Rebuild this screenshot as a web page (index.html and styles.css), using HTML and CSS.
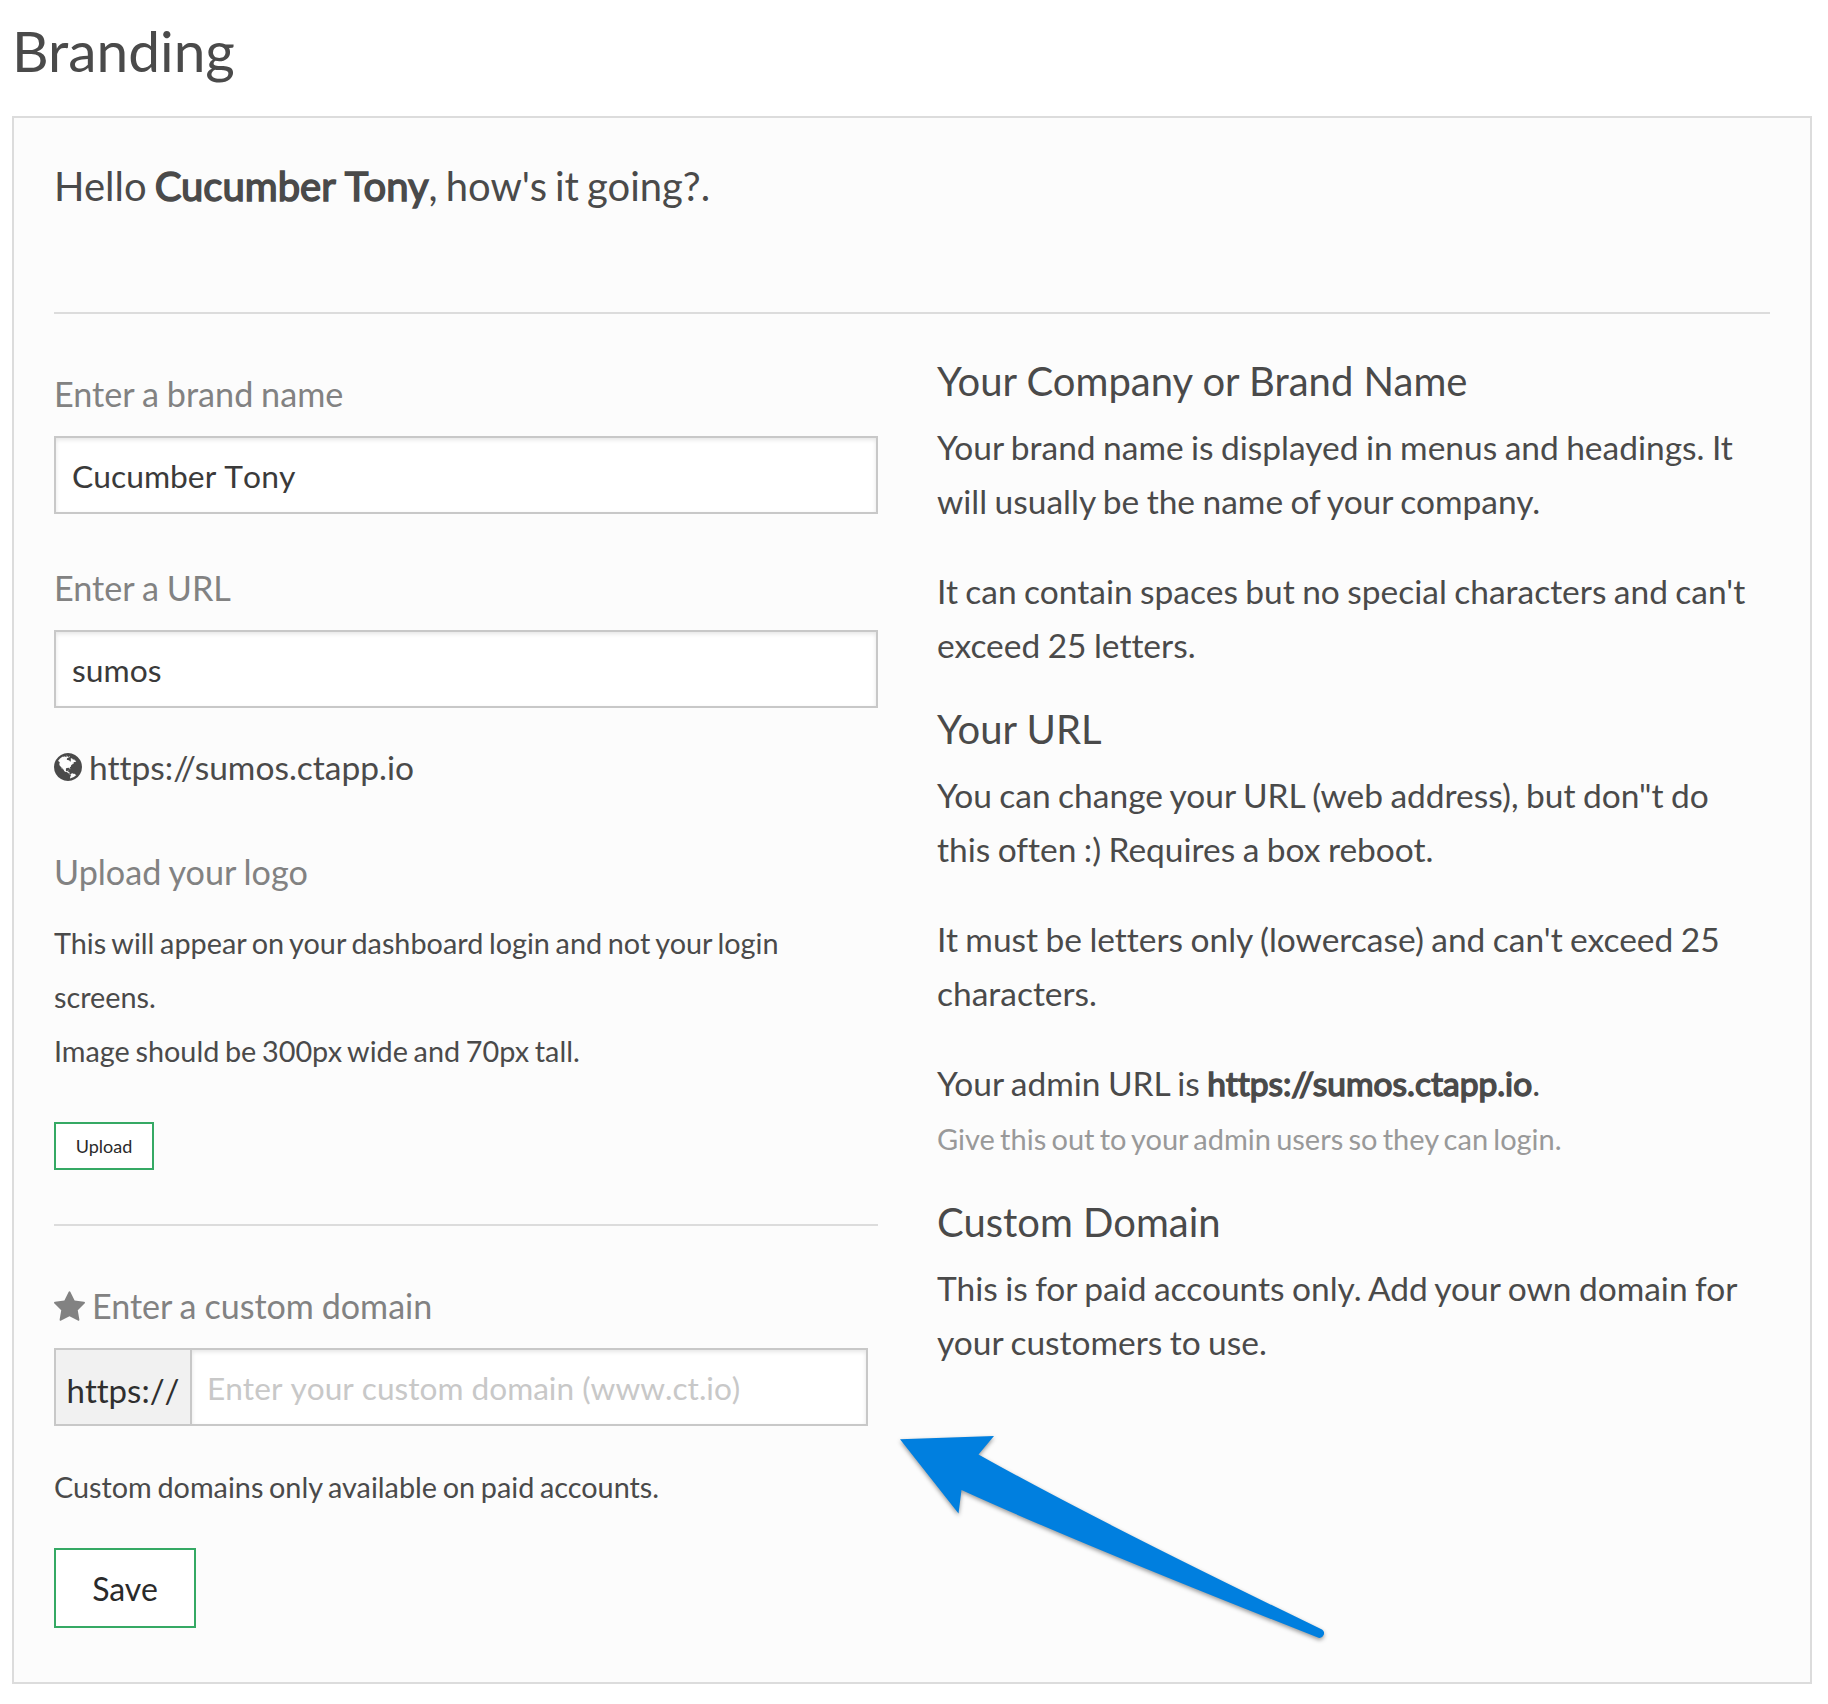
FILE: index.html
```html
<!DOCTYPE html>
<html lang="en">
<head>
<meta charset="utf-8">
<title>Branding</title>
<link rel="stylesheet" href="styles.css">
</head>
<body>
<h1 class="page-title">Branding</h1>
<main class="panel">
  <p class="greeting">Hello <b class="strong">Cucumber Tony</b>, how's it going?.</p>
  <div class="columns">
    <form class="form">
      <label class="label" for="brand">Enter a brand name</label>
      <input class="input" id="brand" type="text" value="Cucumber Tony">
      <label class="label label-next" for="url">Enter a URL</label>
      <input class="input" id="url" type="text" value="sumos">
      <p class="site-url"><svg class="globe" viewBox="128 128 1536 1536"><path d="M896 128q209 0 385.500 103t279.500 279.500 103 385.500-103 385.500-279.500 279.500-385.500 103-385.500-103-279.500-279.500-103-385.500 103-385.500 279.500-279.500 385.500-103zm274 521q-2 1-9.500 9.500t-13.500 9.500q2 0 4.500-5t5-11 3.500-7q6-7 22-15 14-6 52-12 34-8 51 11-2-2 9.500-13t14.500-12q3-2 15-4.500t15-7.500l2-22q-12 1-17.500-7t-6.500-21q0 2-6 8 0-7-4.500-8t-11.500 1-9 1q-10-3-15-7.500t-8-16.500-4-15q-2-5-9.500-11t-9.500-10q-1-2-2.500-5.500t-3-6.500-4-5.500-5.500-2.500-7 5-7.500 10-4.500 5q-3-2-6-1.500t-4.500 1-4.500 3-5 3.500q-3 2-8.500 3t-8.500 2q15-5-1-11-10-4-16-3 9-4 7.500-12t-8.500-14h5q-1-4-8.500-8.500t-17.500-8.500-13-6q-8-5-34-9.500t-33-.5q-5 6-4.500 10.500t4 14 3.500 12.500q1 6-5.500 13t-6.500 12q0 7 14 15.500t10 21.500q-3 8-16 16t-16 12q-5 8-1.500 18.500t10.500 16.500q2 2 1.500 4t-3.500 4.500-5.500 4-6.500 3.500l-3 2q-11 5-20.500-6t-13.500-26q-7-25-16-30-23-8-29 1-5-13-41-26-25-9-58-4 6-1 0-15-7-15-19-12 3-6 4-17.500t1-13.500q3-13 12-23 1-1 7-8.500t9.500-13.500.5-6q35 4 50-11 5-5 11.500-17t10.500-17q9-6 14-5.500t14.500 5.500 14.500 5q14 1 15.500-11t-7.500-20q12 1 3-17-4-7-8-9-12-4-27 5-8 4 2 8-1-1-9.500 10.500t-16.500 17.500-16-5q-1-1-5.500-13.500t-9.500-13.500q-8 0-16 15 3-8-11-15t-24-8q19-12-8-27-7-4-20.500-5t-19.500 4q-5 7-5.500 11.500t5 8 10.500 5.500 11.500 4 8.500 3q14 10 8 14-2 1-8.500 3.500t-11.500 4.500-6 4q-3 4 0 14t-2 14q-5-5-9-17.500t-7-16.500q7 9-25 6l-10-1q-4 0-16 2t-20.500 1-13.500-8q-4-8 0-20 1-4 4-2-4-3-11-9.500t-10-8.500q-46 15-94 41 6 1 12-1 5-2 13-6.500t10-5.500q34-14 42-7l5-5q14 16 20 25-7-4-30-1-20 6-22 12 7 12 5 18-4-3-11.500-10t-14.500-11-15-5q-16 0-22 1-146 80-235 222 7 7 12 8 4 1 5 9t2.500 11 11.500-3q9 8 3 19 1-1 44 27 19 17 21 21 3 11-10 18-1-2-9-9t-9-4q-3 5 .5 18.500t10.500 12.500q-7 0-9.500 16t-2.500 35.500-1 23.500l2 1q-3 12 5.500 34.500t21.500 19.500q-13 3 20 43 6 8 8 9 3 2 12 7.500t15 10 10 10.500q4 5 10 22.500t14 23.500q-2 6 9.500 20t10.500 23q-1 0-2.500 1t-2.500 1q3 7 15.500 14t15.500 13q1 3 2 10t3 11 8 2q2-20-24-62-15-25-17-29-3-5-5.500-15.500t-4.500-14.500q2 0 6 1.500t8.500 3.500 7.500 4 2 3q-3 7 2 17.500t12 18.500 17 19 12 13q6 6 14 19.500t0 13.500q9 0 20 10.500t17 19.500q5 8 8 26t5 24q2 7 8.500 13.500t12.500 9.500l16 8 13 7q5 2 18.500 10.500t21.500 11.500q10 4 16 4t14.500-2.500 13.500-3.500q15-2 29 15t21 21q36 19 55 11-2 1 .5 7.500t8 15.500 9 14.500 5.500 8.500q5 6 18 15t18 15q6-4 7-9-3 8 7 20t18 10q14-3 14-32-31 15-49-18 0-1-2.500-5.500t-4-8.500-2.500-8.500 0-7.500 5-3q9 0 10-3.500t-2-12.500-4-13q-1-8-11-20t-12-15q-5 9-16 8t-16-9q0 1-1.500 5.500t-1.500 6.500q-13 0-15-1 1-3 2.500-17.500t3.500-22.500q1-4 5.500-12t7.500-14.500 4-12.500-4.500-9.500-17.500-2.500q-19 1-26 20-1 3-3 10.500t-5 11.500-9 7q-7 3-24 2t-24-5q-13-8-22.500-29t-9.500-37q0-10 2.500-26.500t3-25-5.500-24.500q3-2 9-9.500t10-10.500q2-1 4.500-1.500t4.500 0 4-1.500 3-6q-1-1-4-3-3-3-4-3 7 3 28.500-1.500t27.500 1.500q15 11 22-2 0-1-2.500-9.500t-.5-13.500q5 27 29 9 3 3 15.500 5t17.500 5q3 2 7 5.500t5.500 4.500 5-.5 8.500-6.500q10 14 12 24 11 40 19 44 7 3 11 2t4.500-9.500 0-14-1.500-12.500l-1-8v-18l-1-8q-15-3-18.500-12t1.500-18.500 15-18.500q1-1 8-3.500t15.500-6.500 12.500-8q21-19 15-35 7 0 11-9-1 0-5-3t-7.500-5-4.500-2q9-5 2-16 5-3 7.500-11t7.500-10q9 12 21 2 8-8 1-16 5-7 20.500-10.500t18.500-9.500q7 2 8-2t1-12 3-12q4-5 15-9t13-5l17-11q3-4 0-4 18 2 31-11 10-11-6-20 3-6-3-9.500t-15-5.500q3-1 11.500-.5t10.500-1.500q15-10-7-16-17-5-43 12zm-163 877q206-36 351-189-3-3-12.500-4.500t-12.500-3.500q-18-7-24-8 1-7-2.500-13t-8-9-12.500-8-11-7q-2-2-7-6t-7-5.500-7.500-4.500-8.500-2-10 1l-3 1q-3 1-5.500 2.500t-5.500 3-4 3 0 2.500q-21-17-36-22-5-1-11-5.500t-10.500-7-10-1.500-11.500 7q-5 5-6 15t-2 13q-7-5 0-17.500t2-18.500q-3-6-10.500-4.500t-12 4.500-11.500 8.500-9 6.500-8.500 5.500-8.500 7.500q-3 4-6 12t-5 11q-2-4-11.500-6.500t-9.500-5.500q2 10 4 35t5 38q7 31-12 48-27 25-29 40-4 22 12 26 0 7-8 20.500t-7 21.500q0 6 2 16z"/></svg>https://sumos.ctapp.io</p>
      <h2 class="label label-logo">Upload your logo</h2>
      <p class="note note-logo">This will appear on your dashboard login and not your login screens.<br>Image should be 300px wide and 70px tall.</p>
      <button class="btn btn-upload" type="button">Upload</button>
      <hr class="rule">
      <label class="label label-domain" for="domain"><svg class="star" viewBox="64 32 1664 1587"><path d="M1728 647q0 22-26 48l-363 354 86 500q1 7 1 20 0 21-10.500 35.500t-30.500 14.500q-19 0-40-12l-449-236-449 236q-22 12-40 12-21 0-31.500-14.500t-10.500-35.500q0-6 2-20l86-500-364-354q-25-27-25-48 0-37 56-46l502-73 225-455q19-41 49-41t49 41l225 455 502 73q56 9 56 46z"/></svg>Enter a custom domain</label>
      <div class="input-group">
        <span class="prefix">https://</span>
        <input class="input input-domain" id="domain" type="text" placeholder="Enter your custom domain (www.ct.io)">
      </div>
      <p class="note note-domain">Custom domains only available on paid accounts.</p>
      <button class="btn btn-save" type="button">Save</button>
    </form>
    <section class="help">
      <h3 class="help-title">Your Company or Brand Name</h3>
      <p class="help-text">Your brand name is displayed in menus and headings. It will usually be the name of your company.</p>
      <p class="help-text">It can contain spaces but no special characters and can't exceed 25 letters.</p>
      <h3 class="help-title">Your URL</h3>
      <p class="help-text">You can change your URL (web address), but don"t do this often :) Requires a box reboot.</p>
      <p class="help-text">It must be letters only (lowercase) and can't exceed 25 characters.</p>
      <p class="help-text">Your admin URL is <b class="strong">https://sumos.ctapp.io</b>.<small class="hint">Give this out to your admin users so they can login.</small></p>
      <h3 class="help-title">Custom Domain</h3>
      <p class="help-text">This is for paid accounts only. Add your own domain for your customers to use.</p>
    </section>
  </div>
  <svg class="arrow" viewBox="0 0 440 220"><path d="M10 19.300L104 16L88.500 34.500Q205 100 432 209.500A4.600 4.600 0 0 1 428.500 217.800Q190 124 71.500 70L68.500 93.500Z"/></svg>
</main>
</body>
</html>
```
FILE: styles.css
```css
* { box-sizing: border-box; }
body {
  margin: 0;
  padding: 23px 16px 20px 12px;
  background: #fff;
  color: #4a4a4a;
  font-family: Lato, sans-serif;
  font-size: 33.5px;
  line-height: 54px;
  font-variant-ligatures: none;
}
h1, h2, h3, p { margin: 0; font-weight: 400; }
.page-title { font-size: 56.8px; line-height: 54px; padding-bottom: 39px; }
.panel {
  position: relative;
  height: 1568px;
  padding: 41px 40px 0;
  border: 2px solid #dcdcdc;
  background: #fcfcfc;
}
.greeting {
  height: 155px;
  border-bottom: 2px solid #dcdcdc;
  font-size: 40px;
  word-spacing: -2.2px;
}
.strong { font-weight: 400; word-spacing: .8px; -webkit-text-stroke: 1.5px currentColor; }
.columns { display: grid; grid-template-columns: 824px 1fr; column-gap: 59px; }
.form { padding-top: 52px; }
.label {
  display: block;
  height: 54px;
  padding-top: 1px;
  color: #828282;
  font-size: 34.2px;
  line-height: 54px;
  word-spacing: -.9px;
}
.label-next { margin-top: 46px; }
.input {
  display: block;
  width: 100%;
  height: 78px;
  margin: 16px 0 0;
  padding: 2px 16px 0;
  border: 2px solid #c8c8c8;
  border-radius: 0;
  outline: 0;
  background: #fff;
  box-shadow: inset 0 2px 4px rgba(0, 0, 0, .1);
  color: #3a3a3a;
  font: 31.8px Lato, sans-serif;
  font-kerning: none;
}
.input::placeholder { color: #c8c8c8; opacity: 1; }
.site-url { display: flex; align-items: center; margin-top: 32px; }
.globe { width: 28px; height: 28px; margin-right: 7px; fill: #4a4a4a; }
.label-logo { margin-top: 50px; }
.note { font-size: 28.8px; word-spacing: -1.7px; }
.note-logo { margin-top: 18px; }
.btn {
  display: block;
  padding: 0;
  border: 2px solid #35a964;
  border-radius: 0;
  background: #fff;
  color: #2a2a2a;
  font-family: Lato, sans-serif;
}
.btn-upload { width: 100px; height: 48px; margin-top: 44px; font-size: 18px; }
.btn-save { width: 142px; height: 80px; margin-top: 34px; font-size: 32px; }
.rule { height: 2px; margin: 54px 0 52px; border: 0; background: #dcdcdc; }
.label-domain { display: flex; align-items: center; font-size: 34.1px; }
.star { width: 31px; height: 30px; margin-right: 7px; fill: #828282; }
.input-group { display: flex; width: 814px; margin-top: 16px; }
.prefix {
  width: 136px;
  height: 78px;
  padding-top: 13px;
  border: 2px solid #c8c8c8;
  border-right: 0;
  background: #f1f1f1;
  color: #2f2f2f;
  text-align: center;
  font-size: 33px;
  font-kerning: none;
}
.input-domain { flex: 1; margin: 0; padding-left: 15px; font-size: 31.6px; }
.note-domain { margin-top: 34px; }
.help { padding: 40px 20px 0 0; }
.help-title { margin-bottom: 12px; font-size: 40px; }
.help-text { margin-bottom: 36px; word-spacing: -1.15px; }
.help-text + .help-title { margin-top: -6px; }
.hint {
  display: block;
  height: 55px;
  color: #999;
  font-size: 29px;
  line-height: 58px;
  word-spacing: -2.2px;
}
.arrow {
  position: absolute;
  left: 876px;
  top: 1302px;
  width: 440px;
  height: 220px;
  overflow: visible;
  fill: #007fdf;
  filter: drop-shadow(0 2px 2px rgba(0, 0, 0, .4));
}
```
